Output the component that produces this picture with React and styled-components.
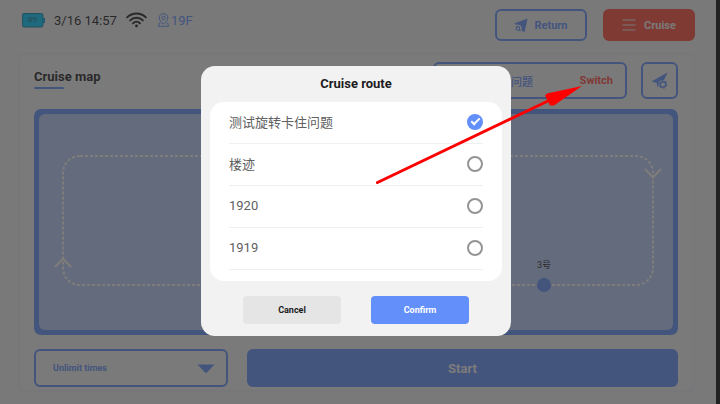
import React, { useState } from 'react';
import styled, { createGlobalStyle, css } from 'styled-components';

const colors = {
    blue: '#628ffa',
    red: '#ff4a38',
    page: '#f0f0f2',
    text: '#1c1c1e',
    map: '#b8cbf8',
    route: '#fffaf4'
};

const ROUTES = ['测试旋转卡住问题', '楼迹', '1920', '1919'];

const BatteryIcon = () => (
    <svg width="23" height="15" viewBox="0 0 23 15" aria-hidden="true">
        <rect x="0.5" y="0.5" width="20.5" height="13.5" rx="1.5" fill="#00c4fa" stroke="#1583a4" />
        <rect x="21" y="5" width="2" height="5" fill="#00a5e0" />
        <text x="10.5" y="9" textAnchor="middle" fontSize="8" fill="#2b6f88">89</text>
    </svg>
);

const WifiIcon = () => (
    <svg width="21" height="16" viewBox="0 0 22 16" fill="none" stroke={colors.text} strokeWidth="2" strokeLinecap="round" aria-hidden="true">
        <path d="M1.2 5.2C6.8-.2 15.2-.2 20.8 5.2" />
        <path d="M4.3 8.4C8.2 4.7 13.8 4.7 17.7 8.4" />
        <path d="M7.4 11.4C9.5 9.4 12.5 9.4 14.6 11.4" />
        <circle cx="11" cy="14.2" r="1.5" fill={colors.text} stroke="none" />
    </svg>
);

const FloorIcon = () => (
    <svg width="11" height="14" viewBox="0 0 11 14" fill="none" stroke={colors.blue} strokeWidth="1" aria-hidden="true">
        <path d="M5.5 11.2C3.2 8.8 1.2 7.2 1.2 4.9a4.3 4.3 0 0 1 8.6 0c0 2.3-2 3.9-4.3 6.3Z" />
        <circle cx="5.5" cy="4.9" r="1.7" />
        <path d="M2.6 10.2H1.2L.5 13.3h10l-.7-3.1H8.4" />
    </svg>
);

const ReturnIcon = () => (
    <svg width="14" height="15" viewBox="0 0 14 15" aria-hidden="true">
        <path d="M13.6.4.2 5.6l2.6 1.4c2.8-1 5.1.8 4.900 3.400L7.400 12l3 2.600Z" fill={colors.blue} />
        <circle cx="3.9" cy="10.4" r="1.8" fill="none" stroke={colors.blue} strokeWidth="1.1" />
        <path d="M5.2 11.8l1.4 1.4" stroke={colors.blue} strokeWidth="1.1" />
    </svg>
);

const MenuIcon = () => (
    <svg width="14" height="12" viewBox="0 0 14 12" stroke="#f4eeee" strokeWidth="1.2" aria-hidden="true">
        <path d="M.5 1h13M.5 6h13M.5 11h13" />
    </svg>
);

const RouteSettingsIcon = () => (
    <svg width="17" height="18" viewBox="0 0 17 18" aria-hidden="true">
        <path d="M16.6.6.4 9.4l5.4 1.5.6 4.6 1.5-2.3-.5-1.9c.3-2 2.6-3.7 5.6-3.2Z" fill={colors.blue} />
        <circle cx="12" cy="12.4" r="2.7" fill="none" stroke={colors.blue} strokeWidth="1.4" />
        <circle cx="12" cy="12.4" r="3.8" fill="none" stroke={colors.blue} strokeWidth="1.3" strokeDasharray="1.7 2.28" />
    </svg>
);

const Chevron = ({ down }) => (
    <svg width="18" height="11" viewBox="0 0 18 11" fill="none" stroke={colors.route} strokeWidth="2" aria-hidden="true">
        <path d={down ? 'M1 1l8 8.5L17 1' : 'M1 10l8-8.5L17 10'} />
    </svg>
);

const App = () => {
    const [selected, setSelected] = useState(ROUTES[0]);

    return (
        <>
            <GlobalStyle />
            <Device>
                <Screen>
                    <TopBar>
                        <Status>
                            <BatteryIcon />
                            <Clock>3/16 14:57</Clock>
                            <WifiIcon />
                            <Floor>
                                <FloorIcon />
                                19F
                            </Floor>
                        </Status>
                        <TopActions>
                            <TopButton type="button"><ReturnIcon />Return</TopButton>
                            <TopButton type="button" $filled><MenuIcon />Cruise</TopButton>
                        </TopActions>
                    </TopBar>

                    <Card>
                        <CardHeader>
                            <CardTitle>Cruise map</CardTitle>
                            <HeaderTools>
                                <CurrentRoute>
                                    <span>{selected}</span>
                                    <SwitchButton type="button">Switch</SwitchButton>
                                </CurrentRoute>
                                <SquareButton type="button" aria-label="Route settings">
                                    <RouteSettingsIcon />
                                </SquareButton>
                            </HeaderTools>
                        </CardHeader>

                        <MapFrame>
                            <MapArea>
                                <Track>
                                    <TrackLine aria-hidden="true">
                                        <rect x="1" y="1" rx="17" />
                                    </TrackLine>
                                    <UpMarker><Chevron /></UpMarker>
                                    <DownMarker><Chevron down /></DownMarker>
                                    <Stop>3号</Stop>
                                </Track>
                            </MapArea>
                        </MapFrame>

                        <CardFooter>
                            <SelectBox>
                                <TimesSelect aria-label="Cruise times" defaultValue="Unlimit times">
                                    <option>Unlimit times</option>
                                </TimesSelect>
                                <svg width="18" height="9" viewBox="0 0 18 9" aria-hidden="true">
                                    <path d="M.5.5h17L10.200 8.200q-1.200 1-2.400 0Z" fill={colors.blue} />
                                </svg>
                            </SelectBox>
                            <StartButton type="button">Start</StartButton>
                        </CardFooter>
                    </Card>
                </Screen>

                <Scrim>
                    <Dialog role="dialog" aria-modal="true" aria-labelledby="route-title">
                        <DialogTitle id="route-title">Cruise route</DialogTitle>
                        <RouteList>
                            {ROUTES.map((route) => (
                                <RouteRow key={route}>
                                    {route}
                                    <Radio
                                        name="route"
                                        checked={selected === route}
                                        onChange={() => setSelected(route)}
                                    />
                                </RouteRow>
                            ))}
                        </RouteList>
                        <DialogActions>
                            <DialogButton type="button">Cancel</DialogButton>
                            <DialogButton type="button" $primary>Confirm</DialogButton>
                        </DialogActions>
                    </Dialog>
                </Scrim>

                {/* Hint arrow from the dialog to the Switch button */}
                <HintArrow width="206" height="100" viewBox="0 0 206 100" aria-hidden="true">
                    <path d="M1.500 97.500 174 15" stroke="#f00" strokeWidth="3" strokeLinecap="round" />
                    <path d="M206 1 171 8.500l-2 2L174 20.500h4Z" fill="#f00" />
                </HintArrow>
            </Device>
        </>
    );
};

// Styled components
const GlobalStyle = createGlobalStyle`
  * {
    box-sizing: border-box;
  }

  body {
    margin: 0;
    background: #222;
    font-family: Roboto, "Noto Sans CJK SC", sans-serif;
    color: ${colors.text};
  }

  button, select {
    font-family: inherit;
    cursor: pointer;
  }

  svg {
    flex: none;
    display: block;
  }
`;

const Device = styled.div`
  position: relative;
  display: flex;
  min-height: 100vh;
  padding-right: 4px;
`;

const Screen = styled.main`
  flex: 1;
  display: flex;
  flex-direction: column;
  gap: 12px;
  padding: 9px 21px 12px 18px;
  background: ${colors.page};
`;

const TopBar = styled.header`
  display: flex;
  justify-content: space-between;
  align-items: flex-start;
`;

const Status = styled.div`
  display: flex;
  align-items: center;
  gap: 9px;
  height: 22px;
  padding-left: 4px;
`;

const Clock = styled.time`
  font-size: 13px;
`;

const Floor = styled.span`
  display: flex;
  align-items: center;
  gap: 2px;
  margin-left: 2px;
  font-size: 13px;
  color: ${colors.blue};
`;

const TopActions = styled.div`
  display: flex;
  gap: 16px;
`;

const TopButton = styled.button`
  display: flex;
  align-items: center;
  justify-content: center;
  gap: ${props => props.$filled ? '8px' : '6px'};
  width: 92px;
  height: 32px;
  padding: 0;
  border: 2px solid ${props => props.$filled ? colors.red : colors.blue};
  border-radius: 6px;
  background: ${props => props.$filled ? colors.red : 'transparent'};
  color: ${props => props.$filled ? '#f4eeee' : colors.blue};
  font-size: 11px;
  font-weight: 700;
`;

const Card = styled.section`
  flex: 1;
  display: flex;
  flex-direction: column;
  padding: 9px 17px 5px 16px;
  border-radius: 6px;
  background: #f2f2f4;
  box-shadow: inset 0 0 5px #dfe1e8;
`;

const CardHeader = styled.div`
  display: flex;
  justify-content: space-between;
  align-items: flex-start;
  margin-bottom: 10px;
`;

const CardTitle = styled.h1`
  margin: 7px 0 0;
  font-size: 13px;
  line-height: 16px;
  font-weight: 700;

  &::after {
    content: '';
    display: block;
    width: 30px;
    height: 2px;
    margin-top: 2px;
    border-radius: 1px;
    background: ${colors.blue};
  }
`;

const HeaderTools = styled.div`
  display: flex;
  gap: 14px;
`;

const CurrentRoute = styled.div`
  display: flex;
  align-items: center;
  justify-content: space-between;
  width: 194px;
  height: 37px;
  padding: 0 12px 0 10px;
  border: 2px solid ${colors.blue};
  border-radius: 6px;
  font-size: 11px;
  font-weight: 500;
  color: ${colors.blue};
`;

const SwitchButton = styled.button`
  padding: 0;
  border: 0;
  background: none;
  color: ${colors.red};
  font-size: 11px;
  font-weight: 700;
`;

const SquareButton = styled.button`
  display: grid;
  place-items: center;
  width: 37px;
  height: 37px;
  padding: 0;
  border: 2px solid ${colors.blue};
  border-radius: 6px;
  background: none;
`;

const MapFrame = styled.div`
  flex: 1;
  display: flex;
  padding: 5px;
  border-radius: 7px;
  background: ${colors.blue};
`;

const MapArea = styled.div`
  flex: 1;
  display: flex;
  padding: 41px 19px 44px 23px;
  border-radius: 6px;
  background: ${colors.map};
`;

const Track = styled.div`
  position: relative;
  flex: 1;
`;

const TrackLine = styled.svg`
  position: absolute;
  width: 100%;
  height: 100%;

  rect {
    width: calc(100% - 2px);
    height: calc(100% - 2px);
    fill: none;
    stroke: ${colors.route};
    stroke-width: 2px;
    stroke-dasharray: 3 2;
  }
`;

const UpMarker = styled.span`
  position: absolute;
  left: -8px;
  bottom: 18px;
`;

const DownMarker = styled.span`
  position: absolute;
  right: -8px;
  top: 13px;
`;

const Stop = styled.span`
  position: absolute;
  right: 103px;
  bottom: -6px;
  display: flex;
  flex-direction: column;
  align-items: center;
  gap: 6px;
  font-size: 9px;
  line-height: 14px;

  &::after {
    content: '';
    width: 14px;
    height: 14px;
    border-radius: 50%;
    background: ${colors.blue};
  }
`;

const CardFooter = styled.div`
  display: grid;
  grid-template-columns: 194px 1fr;
  gap: 19px;
  height: 38px;
  margin-top: 14px;
`;

const SelectBox = styled.div`
  display: flex;
  align-items: center;
  padding-right: 11px;
  border: 2px solid ${colors.blue};
  border-radius: 6px;
`;

const TimesSelect = styled.select`
  flex: 1;
  height: 100%;
  padding: 0 0 0 17px;
  border: 0;
  appearance: none;
  background: none;
  color: ${colors.blue};
  font-size: 9px;
  font-weight: 700;
`;

const StartButton = styled.button`
  border: 0;
  border-radius: 6px;
  background: ${colors.blue};
  color: #f4f4f8;
  font-size: 13px;
  font-weight: 700;
`;

const Scrim = styled.div`
  position: absolute;
  inset: 0 4px 0 0;
  display: grid;
  place-items: center;
  padding: 0 4px 2px 0;
  background: rgba(48, 48, 48, 0.62);
`;

const Dialog = styled.section`
  display: flex;
  flex-direction: column;
  width: 310px;
  padding: 0 9px 12px;
  border-radius: 14px;
  background: #f2f2f2;
`;

const DialogTitle = styled.h2`
  margin: 0;
  font-size: 13px;
  line-height: 36px;
  font-weight: 700;
  text-align: center;
`;

const RouteList = styled.div`
  padding: 0 19px 11px;
  border-radius: 14px;
  background: #fff;
`;

const RouteRow = styled.label`
  display: flex;
  align-items: center;
  justify-content: space-between;
  height: 42px;
  padding-bottom: 2px;
  border-bottom: 1px solid #efefef;
  font-size: 13px;
  color: #606060;
  cursor: pointer;
`;

const Radio = styled.input.attrs({ type: 'radio' })`
  appearance: none;
  display: grid;
  place-items: center;
  width: 16px;
  height: 16px;
  margin: 0;
  border: 2px solid #949494;
  border-radius: 50%;
  background: #fff;

  &:checked {
    border-color: ${colors.blue};
    background: ${colors.blue};
  }

  &:checked::after {
    content: '';
    box-sizing: border-box;
    width: 9px;
    height: 5px;
    margin-bottom: 2px;
    border: solid #fff;
    border-width: 0 0 2px 2px;
    transform: rotate(-45deg);
  }
`;

const DialogActions = styled.div`
  display: flex;
  justify-content: center;
  gap: 30px;
  padding-top: 15px;
`;

const DialogButton = styled.button`
  width: 98px;
  height: 28px;
  border: 0;
  border-radius: 4px;
  background: #e5e5e5;
  color: ${colors.text};
  font-size: 9px;
  font-weight: 700;

  ${props => props.$primary && css`
    background: ${colors.blue};
    color: #fff;
  `}
`;

const HintArrow = styled.svg`
  position: absolute;
  left: 376px;
  top: 85px;
  fill: none;
  pointer-events: none;
`;

export default App;
